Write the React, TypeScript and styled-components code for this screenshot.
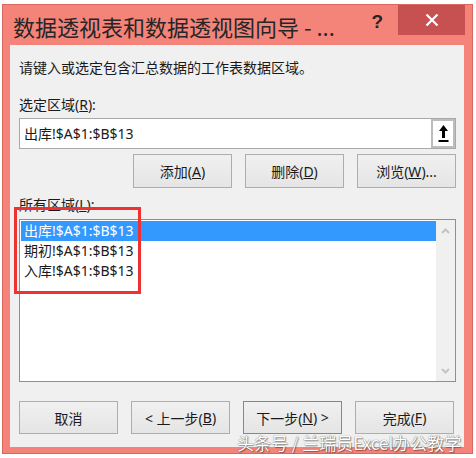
import React from "react";
import styled, { createGlobalStyle } from "styled-components";

const GlobalStyle = createGlobalStyle`
  html, body { margin: 0; padding: 0; background: #ffffff; }
  body { font-family: "Noto Sans", "Noto Sans CJK SC", sans-serif; color: #1a1a1a; }
  * { box-sizing: border-box; }
`;

const Window = styled.div`
  position: relative;
  margin: 4px 0 0 2px;
  width: 471px;
  height: 450px;
  background: #f4837a;
  border: 1px solid #d9685e;
  padding: 0 8px 6px 7px;
  display: flex;
  flex-direction: column;
`;

const TitleBar = styled.div`
  height: 40px;
  display: flex;
  align-items: flex-start;
  margin-right: -1px;
`;

const Title = styled.div`
  flex: 1;
  padding: 2px 0 0 3px;
  font-family: "Noto Sans CJK SC", sans-serif;
  font-size: 22px;
  line-height: 38px;
  color: #262626;
  white-space: nowrap;
`;

const Help = styled.div`
  margin: 5px 15px 0 0;
  font-family: "Liberation Sans", sans-serif;
  font-weight: bold;
  font-size: 19px;
  line-height: 24px;
  color: #262626;
`;

const Close = styled.div`
  width: 67px;
  height: 30px;
  background: #c75050;
  display: flex;
  align-items: center;
  justify-content: center;
`;

const Content = styled.div`
  flex: 1;
  background: #f0f0f0;
  padding: 0 8px 0 9px;
  display: flex;
  flex-direction: column;
  font-size: 14px;
`;

const Text = styled.div<{ $top: number }>`
  margin-top: ${(p) => p.$top}px;
  line-height: 20px;
  font-size: 14px;
  white-space: nowrap;
  color: #1a1a1a;
`;

const InputBox = styled.div`
  margin-top: 3px;
  height: 31px;
  border: 1px solid #a9a9a9;
  background: #fff;
  display: flex;
  align-items: center;
  padding-left: 4px;
`;

const InputText = styled.div`
  flex: 1;
  line-height: 20px;
  white-space: nowrap;
`;

const PickButton = styled.div`
  width: 24px;
  height: 29px;
  border: 2px solid #bdbdbd;
  background: #fff;
  display: flex;
  align-items: center;
  justify-content: center;
`;

const ButtonRow = styled.div<{ $top: number; $justify: string }>`
  margin-top: ${(p) => p.$top}px;
  display: flex;
  justify-content: ${(p) => p.$justify};
  gap: 13px;
`;

const Button = styled.div<{ $h: number; $default?: boolean }>`
  width: 99px;
  height: ${(p) => p.$h}px;
  border: 1px solid ${(p) => (p.$default ? "#3c9be9" : "#adadad")};
  background: linear-gradient(#f0f0f0, #e5e5e5);
  display: flex;
  align-items: center;
  justify-content: center;
  font-size: 14px;
  color: #1a1a1a;
  white-space: nowrap;
`;

const ListBox = styled.div`
  margin-top: 4px;
  height: 163px;
  border: 1px solid #8c8f96;
  background: #fff;
  display: flex;
`;

const Items = styled.div`
  flex: 1;
  padding: 1px 0 0 1px;
`;

const Item = styled.div<{ $selected?: boolean }>`
  height: 20px;
  line-height: 20px;
  padding-left: 3px;
  white-space: nowrap;
  background: ${(p) => (p.$selected ? "#3399ff" : "transparent")};
  color: ${(p) => (p.$selected ? "#ffffff" : "#1a1a1a")};
`;

const ScrollBar = styled.div`
  width: 19px;
  background: #f0f0f0;
  display: flex;
  flex-direction: column;
  justify-content: space-between;
  align-items: center;
  padding: 8px 0 7px;
`;

const RedBox = styled.div`
  position: absolute;
  left: 11px;
  top: 202px;
  width: 127px;
  height: 87px;
  border: 3px solid #ee3232;
`;

const Watermark = styled.div`
  position: absolute;
  left: 234px;
  top: 428px;
  font-family: "Noto Sans CJK SC", sans-serif;
  font-size: 17px;
  line-height: 20px;
  color: #ffffff;
  white-space: nowrap;
  text-shadow: 0 0 1px rgba(0, 0, 0, 0.7), 1px 1px 1px rgba(0, 0, 0, 0.35);
`;

const Chevron = ({ up }: { up?: boolean }) => (
  <svg width="9" height="6" viewBox="0 0 9 6">
    <polyline
      points={up ? "1,5 4.5,1.5 8,5" : "1,1 4.5,4.5 8,1"}
      fill="none"
      stroke="#c4c4c4"
      strokeWidth="2"
    />
  </svg>
);

export default function App() {
  return (
    <>
      <GlobalStyle />
      <Window>
        <TitleBar>
          <Title>数据透视表和数据透视图向导 - ...</Title>
          <Help>?</Help>
          <Close>
            <svg width="14" height="14" viewBox="0 0 14 14">
              <path d="M1.5 1.5 L12.5 12.5 M12.5 1.5 L1.5 12.5" stroke="#fff" strokeWidth="2.2" />
            </svg>
          </Close>
        </TitleBar>
        <Content>
          <Text $top={13}>请键入或选定包含汇总数据的工作表数据区域。</Text>
          <Text $top={17}>
            选定区域(<u>R</u>):
          </Text>
          <InputBox>
            <InputText>出库!$A$1:$B$13</InputText>
            <PickButton>
              <svg width="11" height="19" viewBox="0 0 11 19">
                <path d="M5.5 1 L10 7 L7 7 L7 14 L4 14 L4 7 L1 7 Z" fill="#000" />
                <rect x="0.5" y="16" width="10" height="2" fill="#000" />
              </svg>
            </PickButton>
          </InputBox>
          <ButtonRow $top={5} $justify="flex-end">
            <Button $h={34}>
              添加(<u>A</u>)
            </Button>
            <Button $h={34}>
              删除(<u>D</u>)
            </Button>
            <Button $h={34}>
              浏览(<u>W</u>)...
            </Button>
          </ButtonRow>
          <Text $top={7}>
            所有区域(<u>L</u>):
          </Text>
          <ListBox>
            <Items>
              <Item $selected>出库!$A$1:$B$13</Item>
              <Item>期初!$A$1:$B$13</Item>
              <Item>入库!$A$1:$B$13</Item>
            </Items>
            <ScrollBar>
              <Chevron up />
              <Chevron />
            </ScrollBar>
          </ListBox>
          <ButtonRow $top={19} $justify="flex-start">
            <Button $h={33}>取消</Button>
            <Button $h={33}>
              &lt; 上一步(<u>B</u>)
            </Button>
            <Button $h={33} $default>
              下一步(<u>N</u>) &gt;
            </Button>
            <Button $h={33}>
              完成(<u>F</u>)
            </Button>
          </ButtonRow>
        </Content>
        <RedBox />
        <Watermark>头条号 / 兰瑞员Excel办公教学</Watermark>
      </Window>
    </>
  );
}
